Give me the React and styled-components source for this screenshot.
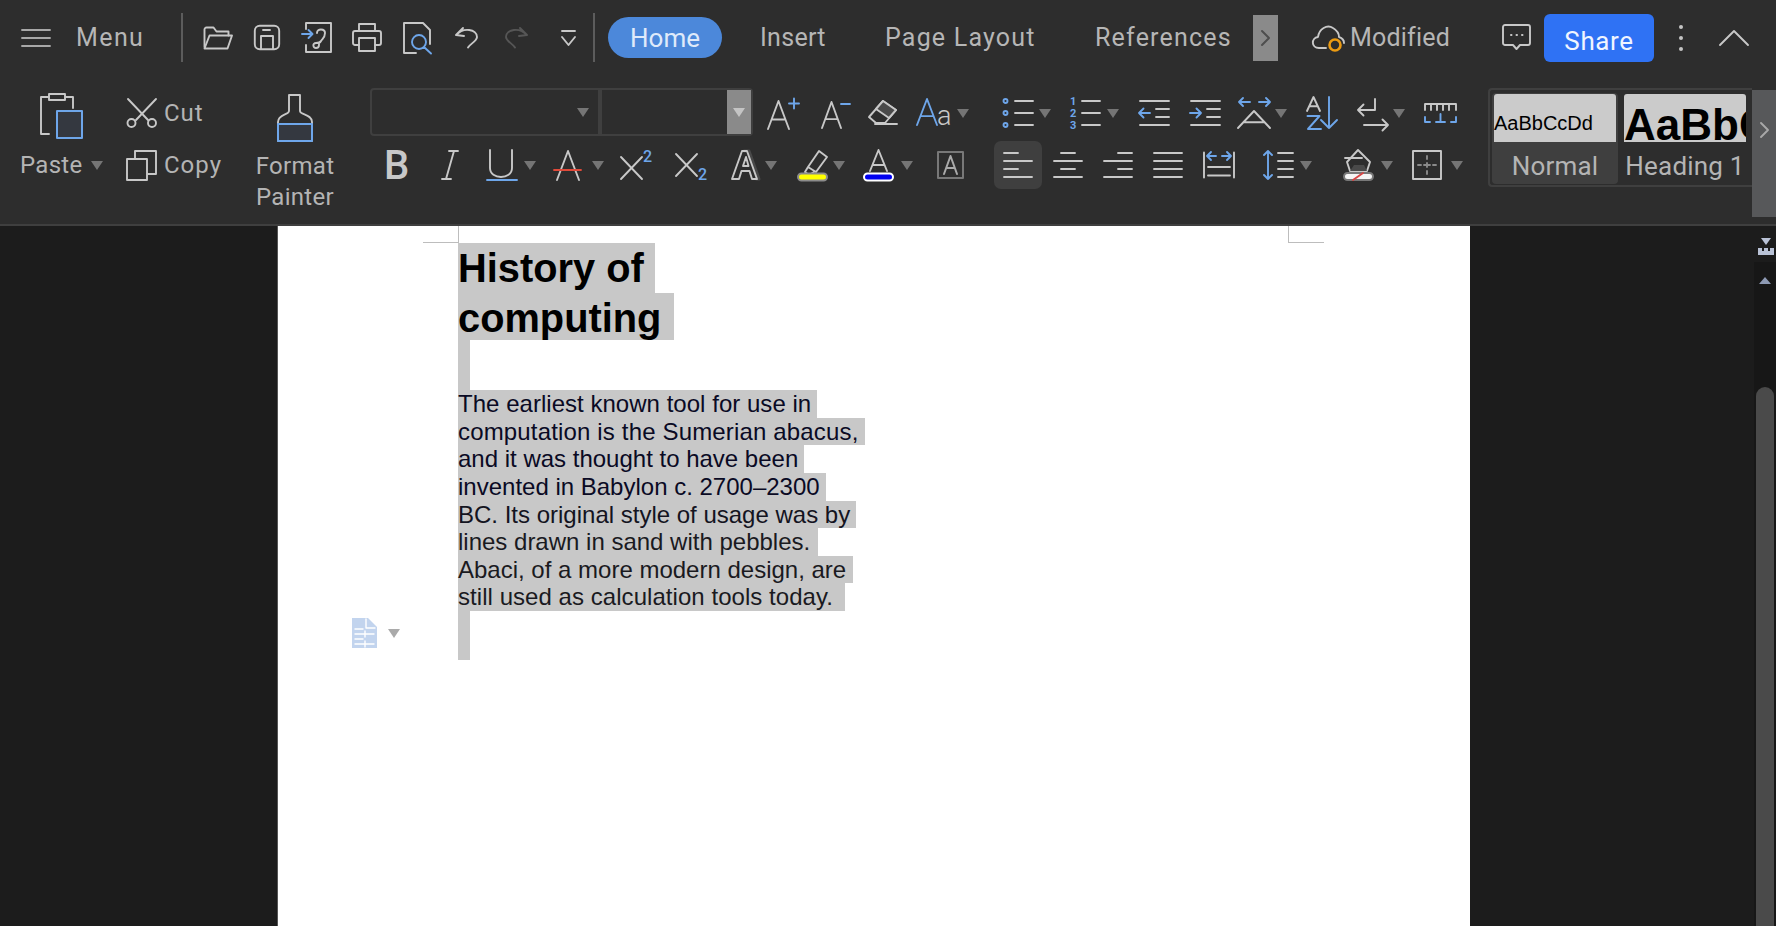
import React from 'react';
import styled, { createGlobalStyle } from 'styled-components';

const C = '#c8c8c8';
const B = '#6ea6ea';

const Global = createGlobalStyle`
  html, body { margin: 0; padding: 0; height: 100%; background: #1c1c1c; overflow: hidden; }
  #root { height: 100%; }
`;

const Shell = styled.div`
  display: flex; flex-direction: column; width: 1776px; height: 926px; overflow: hidden;
  font-family: Roboto, "Liberation Sans", sans-serif;
`;
const Header = styled.header`
  height: 226px; flex: none; box-sizing: border-box; background: #2d2d2d;
  border-bottom: 2px solid #3f3f3f; display: flex; flex-direction: column; overflow: hidden;
`;
const TopBar = styled.div`
  height: 75px; flex: none; display: flex; align-items: center; color: #b6b6b6; font-size: 25px;
`;
const Hamburger = styled.button`
  all: unset; display: flex; margin-left: 22px; width: 28px;
`;
const MenuLabel = styled.span`
  margin-left: 26px; width: 105px; letter-spacing: 1.4px;
`;
const Sep = styled.i`
  display: block; width: 2px; height: 49px; background: #5c5c5c; flex: none;
`;
const QuickTools = styled.div`
  display: flex; align-items: center; margin-left: 10px;
`;
const Cell = styled.div`
  display: flex; justify-content: center; align-items: center; flex: none; width: ${p => p.$w}px;
  margin-left: ${p => p.$ml || 0}px;
`;
const Pill = styled.div`
  margin-left: 13px; width: 114px; height: 41px; border-radius: 21px; background: #4c88da; color: #dfeafa; font-size: 26px;
  display: flex; align-items: center; justify-content: center;
`;
const Tab = styled.span`
  margin-left: ${p => p.$ml}px; width: ${p => p.$w}px; letter-spacing: ${p => p.$ls}px; white-space: nowrap; flex: none;
`;
const ScrollTab = styled.div`
  margin-left: 22px; width: 25px; height: 46px; background: #8a8a8a; display: flex; align-items: center; justify-content: center; flex: none;
`;
const Modified = styled.div`
  display: flex; align-items: center; gap: 4px; margin-left: 34px; width: 185px; flex: none; letter-spacing: .2px;
`;
const ShareBtn = styled.button`
  all: unset; box-sizing: border-box; margin-left: 9px; width: 110px; height: 48px; border-radius: 6px; background: #2f72f4;
  color: #f0f5ff; text-align: center; line-height: 54px; font-size: 26px; flex: none; letter-spacing: .6px;
`;
const Dots = styled.div`
  margin-left: 25px; width: 6px; display: flex; flex-direction: column; gap: 7px; flex: none;
  i { display: block; width: 4px; height: 4px; border-radius: 50%; background: #c4c4c4; }
`;
const Ribbon = styled.div`
  flex: 1; display: flex; align-items: flex-start; padding-top: 12px; color: #b4b4b4; font-size: 24px;
`;
const PasteGroup = styled.div`
  width: 106px; margin-left: 20px; flex: none;
`;
const RowBox = styled.div`
  height: 52px; box-sizing: border-box; display: flex; align-items: center; padding-left: ${p => p.$pl || 0}px; padding-top: ${p => p.$pt || 0}px;
`;
const PasteLabel = styled.div`
  display: flex; align-items: center; gap: 8px; letter-spacing: .3px;
`;
const ClipGroup = styled.div`
  width: 109px; flex: none;
`;
const ClipRow = styled.div`
  height: 52px; display: flex; align-items: center; gap: 7px; letter-spacing: 1px;
`;
const PainterGroup = styled.div`
  width: 120px; flex: none; text-align: center; line-height: 31px; letter-spacing: .3px;
`;
const PainterIcon = styled.div`
  display: flex; justify-content: center; padding-top: 7px; height: 48px; margin-bottom: 9px;
`;
const Controls = styled.div`
  width: 1118px; flex: none; margin-left: 15px;
`;
const ToolRow = styled.div`
  height: 52px; display: flex; align-items: center;
`;
const Tool = styled.div`
  flex: none; width: ${p => p.$w}px; margin-left: ${p => p.$ml}px; height: 48px; display: flex; align-items: center;
  justify-content: ${p => (p.$center ? 'center' : 'space-between')};
  background: ${p => (p.$on ? '#3f3f3f' : 'transparent')}; border-radius: 7px;
`;
const Caret = styled.i`
  display: block; flex: none; width: 0; height: 0;
  border-left: 6.5px solid transparent; border-right: 6.5px solid transparent; border-top: 9px solid ${p => p.$c || '#757575'};
`;
const Combo = styled.div`
  flex: none; box-sizing: border-box; height: 48px; margin-top: -2px; border: 2px solid #3f3f3f; width: ${p => p.$w}px;
  border-radius: ${p => p.$r}; display: flex; justify-content: flex-end; align-items: center;
  padding-right: ${p => p.$pr || 0}px;
`;
const ComboArrow = styled.div`
  width: 24px; height: 100%; background: #8a8a8a; display: flex; align-items: center; justify-content: center;
`;
const StylePanel = styled.div`
  flex: none; width: 264px; height: 99px; box-sizing: border-box; margin-top: 1px;
  border: 2px solid #3f3f3f; border-right: none; border-radius: 4px 0 0 4px; display: flex; padding: 3px 0 0 2px; gap: 4px; overflow: hidden;
`;
const StyleCard = styled.div`
  flex: none; width: ${p => p.$w}px; height: 91px; box-sizing: border-box; border-radius: 4px; padding: 1px 2px;
  background: ${p => (p.$on ? '#3f3f3f' : 'transparent')}; text-align: center;
`;
const StylePreview = styled.div`
  height: 48px; background: #cbcbcb; border-radius: 3px 3px 0 0; color: #000; overflow: hidden; white-space: nowrap; text-align: left;
  font-family: "Liberation Sans", Arial, sans-serif; font-size: ${p => p.$size}px; font-weight: ${p => p.$weight};
  line-height: ${p => p.$lh}px;
`;
const StyleLabel = styled.div`
  font-size: 26px; line-height: 48px; color: #b4b4b4; white-space: nowrap; letter-spacing: .2px;
`;
const StyleStrip = styled.div`
  flex: none; width: 24px; height: 127px; margin-top: 3px; background: #57585a; display: flex; justify-content: center; padding-top: 32px; box-sizing: border-box;
`;
const DocArea = styled.main`
  flex: 1; display: flex; background: #1c1c1c; min-height: 0;
`;
const Page = styled.article`
  position: relative; flex: none; box-sizing: border-box; margin-left: 277px; width: 1193px; background: #fff;
  padding: 17px 0 0 180px; border-left: 1px solid #555; font-family: "Liberation Sans", Arial, sans-serif;
`;
const CropH = styled.i`
  position: absolute; top: 16px; left: ${p => p.$x}px; width: 36px; height: 1px; background: #bdbdbd;
`;
const CropV = styled.i`
  position: absolute; top: 0; left: ${p => p.$x}px; width: 1px; height: 16px; background: #bdbdbd;
`;
const Sel = styled.div`
  width: ${p => p.$w}px; height: ${p => p.$h}px; line-height: ${p => p.$lh || p.$h}px; background: #c8c8c8; white-space: nowrap;
`;
const HeadLine = styled(Sel)`
  font-size: 39.8px; font-weight: 700; color: #000;
`;
const BodyLine = styled(Sel)`
  font-size: 24px; color: ${p => p.$c}; letter-spacing: ${p => p.$ls || 0}px;
`;
const Gadget = styled.div`
  position: absolute; left: 74px; top: 392px; display: flex; align-items: center; gap: 11px;
`;
const Rail = styled.aside`
  flex: 1; display: flex; flex-direction: column; align-items: flex-end;
`;
const RailTop = styled.div`
  height: 36px; width: 100%; display: flex; justify-content: flex-end; padding: 12px 2px 0 0; box-sizing: border-box;
`;
const RailTrack = styled.div`
  flex: 1; width: 22px; background: #171717; display: flex; flex-direction: column; align-items: center; padding-top: 15px; box-sizing: border-box;
`;
const Thumb = styled.div`
  margin-top: 103px; flex: 1; width: 18px; border-radius: 9px 9px 0 0; background: #4a4a4a;
`;

const Svg = styled.svg`
  display: block; flex: none; fill: none; stroke: ${C}; stroke-width: 1.9; overflow: visible;
  stroke-linecap: round; stroke-linejoin: round;
`;
const Ic = ({ w, h, c, sw, children }) => (
  <Svg width={w} height={h} viewBox={`0 0 ${w} ${h}`} style={c || sw ? { stroke: c, strokeWidth: sw } : undefined}>{children}</Svg>
);
const T = styled.text`
  font-family: Roboto, "Liberation Sans", sans-serif; stroke: none; fill: ${p => p.$c || C}; font-size: ${p => p.$s}px; font-weight: ${p => p.$w || 400};
`;
const Bl = ({ d }) => <path d={d} stroke={B} />;

const LetterA = ({ x = 0, y = 0, w = 22, h = 30, c }) => (
  <path stroke={c} d={`M${x} ${y + h} L${x + w / 2} ${y} L${x + w} ${y + h} M${x + w * .17} ${y + h * .66} H${x + w * .83}`} />
);

const Lines = ({ x = 0, rows }) => rows.map(([a, b, y], i) => <path key={i} d={`M${x + a} ${y} H${x + b}`} />);

const quick = [
  { w: 50, icon: <Ic w={30} h={24}><path d="M1.500 21V3.500a2 2 0 0 1 2-2h7l3 4h12v4" /><path d="M1.500 22.500l5-13h22.500l-4.500 13z" /></Ic> },
  { w: 47, icon: <Ic w={26} h={25}><rect x=".8" y=".8" width="24.400" height="23.400" rx="5" /><path d="M7 24V11h12v13M9 5h7" /></Ic> },
  { w: 53, icon: <Ic w={30} h={31}><path d="M4 7V1h25v29H4v-7" /><Bl d="M0 12h10M6.500 8l4 4-4 4" /><path d="M15 11c0-5 8-4.500 8 0 0 5-3 6-4 8-1 2-2 2-5 2-4 0-3 5 0 5 2 0 3-1 3-3v-2" /></Ic> },
  { w: 47, icon: <Ic w={30} h={29}><path d="M7 8V1h16v7M7 22H3a2 2 0 0 1-2-2V10a2 2 0 0 1 2-2h24a2 2 0 0 1 2 2v10a2 2 0 0 1-2 2h-4" /><path d="M7 15h16v13H7z" /></Ic> },
  { w: 55, icon: <Ic w={29} h={32}><path d="M13 31H1V1h19l7 7v14" /><Bl d="M23 20a7 7 0 1 1-14 0 7 7 0 0 1 14 0zM21 25l7 6.500" /></Ic> },
  { w: 43, icon: <Ic w={23} h={21}><path d="M1 8l7-7M1 8l8 1M1.500 8C8 0 22 2 22 10c0 4-7 7-9 10.500" /></Ic> },
  { w: 56, icon: <Ic w={23} h={21} c="#565656"><path d="M22 8l-7-7M22 8l-8 1M21.500 8C15 0 1 2 1 10c0 4 7 7 9 10.500" /></Ic> },
  { w: 49, icon: <Ic w={15} h={16}><path d="M1 1h13M1 7l6.500 8L14 7" /></Ic> },
];

const rowOne = [
  { ml: 15, w: 32, icon: <Ic w={32} h={32}><LetterA y={4} w={21} h={28} /><Bl d="M21 6.500h10M26 1.500v10" /></Ic> },
  { ml: 22, w: 28, icon: <Ic w={28} h={30}><LetterA y={4} w={19} h={26} /><Bl d="M19 6h9" /></Ic> },
  { ml: 18, w: 31, icon: <Ic w={31} h={30}><path d="M1 19L15 3l13 9-11 13h-9zM7 26H29" /><path d="M8 11l13 9 7-8-13-9z" fill="#4a4a4a" /></Ic> },
  { ml: 18, w: 52, icon: <><Ic w={36} h={30}><LetterA y={1} w={20} h={26} c={B} /><T x="20" y="27" $s={27} $w={300}>a</T></Ic><Caret /></> },
  { ml: 33, w: 49, icon: <><Ic w={33} h={34}><g stroke={B}><circle cx="3.500" cy="5" r="2" /><circle cx="3.500" cy="17" r="2" /><circle cx="3.500" cy="29" r="2" /></g><Lines rows={[[13, 31, 5], [13, 31, 17], [13, 31, 29]]} /></Ic><Caret /></> },
  { ml: 19, w: 49, icon: <><Ic w={33} h={34}><T x="0" y="9" $s={11} $w={700} $c={B}>1</T><T x="0" y="21" $s={11} $w={700} $c={B}>2</T><T x="0" y="33" $s={11} $w={700} $c={B}>3</T><Lines rows={[[12, 30, 5], [12, 30, 17], [12, 30, 29]]} /></Ic><Caret /></> },
  { ml: 19, w: 32, icon: <Ic w={32} h={28}><Lines rows={[[2, 31, 2], [18, 31, 10], [18, 31, 18], [2, 31, 26]]} /><Bl d="M12 14H1M5.500 9.500L1 14l4.500 4.500" /></Ic> },
  { ml: 19, w: 32, icon: <Ic w={32} h={28}><Lines rows={[[2, 31, 2], [18, 31, 10], [18, 31, 18], [2, 31, 26]]} /><Bl d="M1 14h11M7.500 9.500L12 14l-4.500 4.500" /></Ic> },
  { ml: 17, w: 49, icon: <><Ic w={33} h={32}><Bl d="M12 5H1M5 1L1 5l4 4M21 5h11M28 1l4 4-4 4" /><LetterA y={14} w={32} h={17} /></Ic><Caret /></> },
  { ml: 19, w: 34, icon: <Ic w={34} h={34}><LetterA x={1} y={1} w={13} h={14} /><Bl d="M1.500 20h12L2 33h13M23 1v31M15 24l8 8 8-8" /></Ic> },
  { ml: 17, w: 48, icon: <><Ic w={32} h={30}><path d="M18 1v11H1M6.500 6.500L1 12l5.500 5.500M7 27h24M25.500 21.500L31 27l-5.500 5.500" /></Ic><Caret /></> },
  { ml: 19, w: 33, icon: <Ic w={33} h={20}><path d="M1 7V1h31v6M7 2v5M13 2v5M19 2v5M25 2v5" /><Bl d="M1 14v5h5M32 14v5h-5M16.500 11v8M12 19h9" /></Ic> },
];

const AlignIcon = ({ rows }) => <Ic w={28} h={26}><Lines rows={rows.map(([a, b], i) => [a, b, 1 + i * 8])} /></Ic>;

const rowTwo = [
  { ml: 15, w: 23, center: 1, icon: <Ic w={23} h={30}><T x="-1" y="29" $s={40} $w={500}>B</T></Ic> },
  { ml: 33, w: 18, center: 1, icon: <Ic w={18} h={30}><path d="M13 1L5 29M8 1h9M1 29h9" /></Ic> },
  { ml: 28, w: 49, icon: <><Ic w={30} h={32}><path d="M3 1v18c0 12 22 12 22 0V1" /><Bl d="M0 31h30" /></Ic><Caret /></> },
  { ml: 18, w: 50, icon: <><Ic w={28} h={30}><path d="M3 30L14 1l11 29" /><path d="M0 20h27" stroke="#e04a3a" /></Ic><Caret /></> },
  { ml: 16, w: 35, icon: <Ic w={35} h={30}><path d="M1 7l21 22M22 7L1 29" /><T x="23" y="12" $s={16} $w={500} $c={B}>2</T></Ic> },
  { ml: 20, w: 34, icon: <Ic w={34} h={30}><path d="M1 4l21 22M22 4L1 26" /><T x="23" y="30" $s={16} $w={500} $c={B}>2</T></Ic> },
  { ml: 22, w: 46, icon: <><Ic w={29} h={30}><path d="M13 1h5l10 28h-2.500" stroke="#484848" strokeWidth="3" /><path d="M1 29L11 1h5l10 28h-5l-2.500-8h-8L8 29zM12 16l3-9 2.500 9z" /></Ic><Caret /></> },
  { ml: 20, w: 48, icon: <><Ic w={31} h={32}><path d="M11 18L22 2l8 6-11 15-8-5zM11 18l-3 5 4 3 5-3" /><rect x="1" y="24.500" width="29" height="7" rx="3.500" fill="#ffff00" stroke="#8c8c8c" strokeWidth="2" /></Ic><Caret /></> },
  { ml: 18, w: 50, icon: <><Ic w={31} h={32}><path d="M7 22L15.500 1 24 22M10 16h11" /><rect x="1" y="24.500" width="29" height="7" rx="3.500" fill="#0000f0" stroke="#fff" strokeWidth="2" /></Ic><Caret /></> },
  { ml: 24, w: 27, center: 1, icon: <Ic w={27} h={28} c="#787878" sw={2}><rect x="1" y="1" width="25" height="26" /><LetterA x={7} y={5} w={13} h={18} c="#aaa" /></Ic> },
  { ml: 30, w: 48, center: 1, on: 1, icon: <AlignIcon rows={[[0, 14], [0, 28], [0, 14], [0, 28]]} /> },
  { ml: 11, w: 29, center: 1, icon: <AlignIcon rows={[[7, 21], [0, 28], [7, 21], [0, 28]]} /> },
  { ml: 21, w: 30, center: 1, icon: <AlignIcon rows={[[14, 28], [0, 28], [14, 28], [0, 28]]} /> },
  { ml: 20, w: 30, center: 1, icon: <AlignIcon rows={[[0, 28], [0, 28], [0, 28], [0, 28]]} /> },
  { ml: 20, w: 32, icon: <Ic w={32} h={28}><path d="M1 1.500v25M31 1.500v25M5 16h22M5 24.500h22" /><Bl d="M4 5h9M8 1L4 5l4 4M28 5h-9M24 1l4 4-4 4" /></Ic> },
  { ml: 28, w: 49, icon: <><Ic w={30} h={30}><Bl d="M5 1v28M1 5l4-4 4 4M1 25l4 4 4-4" /><Lines rows={[[15, 30, 3], [15, 30, 11], [15, 30, 19], [15, 30, 27]]} /></Ic><Caret /></> },
  { ml: 31, w: 50, icon: <><Ic w={31} h={32}><path d="M4 13L15 1l12 12-3 9H7zM2 9h17" /><path d="M7 22l4-6h10l3 6z" fill="#4a4a4a" stroke="none" /><rect x="1" y="24" width="29" height="7" rx="3.500" fill="#f4f4f4" stroke="#787878" strokeWidth="2" /><path d="M10 31l10-7" stroke="#d84444" /></Ic><Caret /></> },
  { ml: 19, w: 51, icon: <><Ic w={30} h={30}><rect x="1" y="1" width="28" height="28" /><path d="M15 6v3M15 13v4M15 21v3M6 15h3M12 15h6M21 15h3" stroke="#8a8a8a" /></Ic><Caret /></> },
];

const body = [
  ['The earliest known tool for use in', 359, 28, '#0a0a24', 0.03],
  ['computation is the Sumerian abacus,', 407, 27, '#0a0a24', 0.16],
  ['and it was thought to have been', 346, 28, '#0a0a24', 0],
  ['invented in Babylon c. 2700–2300', 368, 28, '#0a0a24', 0],
  ['BC. Its original style of usage was by', 398, 27, '#14141f', 0],
  ['lines drawn in sand with pebbles.', 360, 28, '#1a1a1f', 0],
  ['Abaci, of a more modern design, are', 395, 27, '#1a1a1f', 0],
  ['still used as calculation tools today.', 387, 28, '#1a1a1f', 0.05],
];

export default function App() {
  return (
    <Shell>
      <Global />
      <Header>
        <TopBar>
          <Hamburger aria-label="Menu icon">
            <Ic w={28} h={18} c="#a8a8a8"><path d="M0 1h28M0 9h28M0 17h28" /></Ic>
          </Hamburger>
          <MenuLabel>Menu</MenuLabel>
          <Sep />
          <QuickTools>
            {quick.map((q, i) => <Cell key={i} $w={q.w}>{q.icon}</Cell>)}
          </QuickTools>
          <Sep />
          <Pill>Home</Pill>
          <Tab $ml={38} $w={66} $ls={0.3}>Insert</Tab>
          <Tab $ml={59} $w={151} $ls={1.2}>Page Layout</Tab>
          <Tab $ml={59} $w={136} $ls={1.2}>References</Tab>
          <ScrollTab><Ic w={9} h={16} c="#4e4e4e" sw={2}><path d="M1 1l7 7-7 7" /></Ic></ScrollTab>
          <Modified>
            <Ic w={34} h={28}>
              <path d="M14 24H7c-8 0-8-10-1-11C7 5 15 0 21 4c5 3 6 7 6 9 3 1 5 3 5 6" />
              <circle cx="23" cy="21" r="5.500" stroke="#eb9b12" strokeWidth="2.600" />
            </Ic>
            Modified
          </Modified>
          <Cell $w={38}>
            <Ic w={29} h={27}><path d="M3 1h23a2 2 0 0 1 2 2v16a2 2 0 0 1-2 2h-8l-3.500 4-3.500-4H3a2 2 0 0 1-2-2V3a2 2 0 0 1 2-2z" /><path d="M9 11h.5M14.500 11h.5M20 11h.5" strokeWidth="2" /></Ic>
          </Cell>
          <ShareBtn>Share</ShareBtn>
          <Dots><i /><i /><i /></Dots>
          <Cell $w={30} $ml={34}>
            <Ic w={30} h={16}><path d="M1 15L15 1l14 14" /></Ic>
          </Cell>
        </TopBar>
        <Ribbon>
          <PasteGroup>
            <RowBox $pl={20} $pt={5}>
              <Ic w={42} h={46}>
                <path d="M9 41H1V4h32v11" />
                <path d="M9 1h16v6H9z" fill="#2d2d2d" />
                <rect x="17" y="18" width="25" height="27" fill="#343840" stroke={B} strokeWidth="2" />
              </Ic>
            </RowBox>
            <RowBox><PasteLabel>Paste<Caret /></PasteLabel></RowBox>
          </PasteGroup>
          <ClipGroup>
            <ClipRow>
              <Ic w={31} h={30}><path d="M2 1l20 21M30 1L10 22" /><circle cx="5.500" cy="25" r="4" /><circle cx="26" cy="25" r="4" /></Ic>
              Cut
            </ClipRow>
            <ClipRow>
              <Ic w={31} h={31}><path d="M9 9V1h21v23h-8" /><rect x="1" y="9" width="20" height="21" /></Ic>
              Copy
            </ClipRow>
          </ClipGroup>
          <PainterGroup>
            <PainterIcon>
              <Ic w={36} h={48}>
                <path d="M12 1h11v16c0 4 12 3 12 11v19H1V28c0-8 11-7 11-11z" />
                <rect x="1" y="30" width="34" height="17" fill="#343840" stroke={B} strokeWidth="2" />
              </Ic>
            </PainterIcon>
            Format<br />Painter
          </PainterGroup>
          <Controls>
            <ToolRow>
              <Combo $w={230} $r="4px 0 0 4px" $pr={9}><Caret /></Combo>
              <Combo $w={153} $r="0 4px 4px 0"><ComboArrow><Caret $c="#c4c4c4" /></ComboArrow></Combo>
              {rowOne.map((t, i) => <Tool key={i} $w={t.w} $ml={t.ml}>{t.icon}</Tool>)}
            </ToolRow>
            <ToolRow>
              {rowTwo.map((t, i) => <Tool key={i} $w={t.w} $ml={t.ml} $center={t.center} $on={t.on}>{t.icon}</Tool>)}
            </ToolRow>
          </Controls>
          <StylePanel>
            <StyleCard $w={126} $on>
              <StylePreview $size={20} $weight={400} $lh={58}>AaBbCcDd</StylePreview>
              <StyleLabel>Normal</StyleLabel>
            </StyleCard>
            <StyleCard $w={126}>
              <StylePreview $size={44} $weight={700} $lh={62}>AaBbCcDd</StylePreview>
              <StyleLabel>Heading 1</StyleLabel>
            </StyleCard>
          </StylePanel>
          <StyleStrip><Ic w={9} h={16} c="#a8a8a8"><path d="M1 1l7 7-7 7" /></Ic></StyleStrip>
        </Ribbon>
      </Header>
      <DocArea>
        <Page>
          <CropV $x={180} />
          <CropH $x={145} />
          <CropV $x={1010} />
          <CropH $x={1010} />
          <HeadLine $w={197} $h={50}>History of</HeadLine>
          <HeadLine $w={216} $h={47} $lh={51}>computing</HeadLine>
          <Sel $w={12} $h={50} />
          {body.map(([text, w, h, c, ls]) => <BodyLine key={text} $w={w} $h={h} $c={c} $ls={ls}>{text}</BodyLine>)}
          <Sel $w={12} $h={49} />
          <Gadget>
            <Ic w={25} h={30} c="#fff" sw={1.4}>
              <path d="M0 0h16l9 9v21H0z" fill="#c2d4ee" stroke="none" />
              <path d="M14 1v9h9M3 11h8M3 16h19M3 21h8M3 26h19M13 13v6M13 23v6" />
            </Ic>
            <Caret $c="#aaaaaa" />
          </Gadget>
        </Page>
        <Rail>
          <RailTop>
            <Ic w={16} h={17} c="#b9c2d6">
              <path d="M3 0h10l-5 7z" fill="#b9c2d6" stroke="none" />
              <path d="M0 10h4v3h2v-3h4v3h2v-3h4v7H0z" fill="#b9c2d6" stroke="none" />
            </Ic>
          </RailTop>
          <RailTrack>
            <Ic w={12} h={7} c="#8e9ab4"><path d="M0 7l6-7 6 7z" fill="#8e9ab4" stroke="none" /></Ic>
            <Thumb />
          </RailTrack>
        </Rail>
      </DocArea>
    </Shell>
  );
}
